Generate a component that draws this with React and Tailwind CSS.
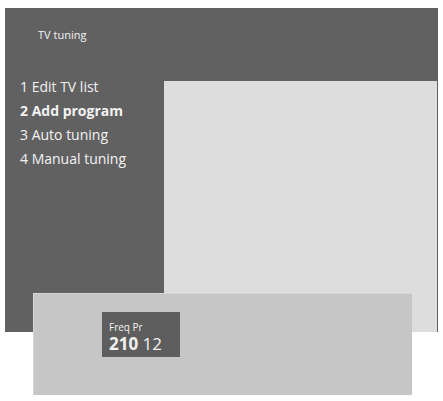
export default function App() {
  return (
    <div className="w-[443px] h-[401px] bg-white pt-[8px] pl-[5px] overflow-hidden" style={{ fontFamily: '"Open Sans", "Noto Sans", sans-serif' }}>
      <div className="flex w-[433px] h-[324px] bg-[#626162]">
        <div className="w-[159px] shrink-0 pl-[15px] pt-[19px] text-[#f2f2f2]">
          <div className="pl-[18px] text-[11px] leading-[16px]">TV tuning</div>
          <div className="mt-[32px] flex flex-col text-[14px] leading-[24px]">
            <div>1 Edit TV list</div>
            <div className="font-bold">2 Add program</div>
            <div>3 Auto tuning</div>
            <div>4 Manual tuning</div>
          </div>
        </div>
        <div className="flex-1 pt-[73px] pr-[1px] flex">
          <div className="flex-1 bg-[#dddddd]" />
        </div>
      </div>
      <div className="relative -mt-[39px] ml-[28px] w-[379px] h-[102px] bg-[#c6c6c6] border-t border-l border-[#d6d6d6] pt-[18px] pl-[68px]">
        <div className="w-[78px] h-[45px] bg-[#5e5e5e] pl-[7px] pt-[9px] text-[#f2f2f2]">
          <div className="text-[10px] leading-[13px]">Freq Pr</div>
          <div className="text-[17px] leading-[19px]">
            <span className="font-bold">210</span> <span className="font-medium">12</span>
          </div>
        </div>
      </div>
    </div>
  );
}
